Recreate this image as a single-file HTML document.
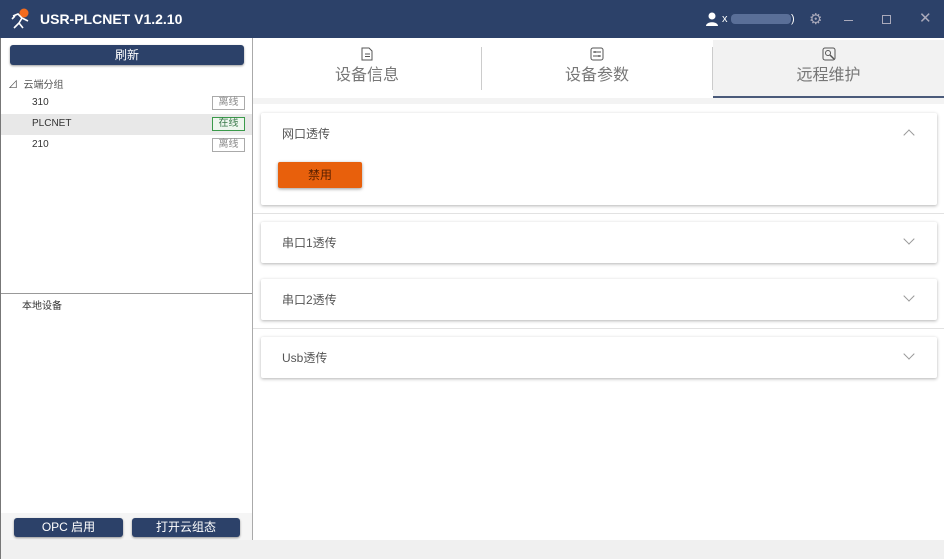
<!DOCTYPE html>
<html><head><meta charset="utf-8"><style>
*{margin:0;padding:0;box-sizing:border-box}
body{width:944px;height:559px;overflow:hidden;background:#f2f2f2;font-family:"Liberation Sans","Noto Sans CJK SC",sans-serif;position:relative}
.abs{position:absolute}
.title{left:0;top:0;width:944px;height:38px;background:#2c4169;color:#fff}
.btn{background:#2c4169;color:#fff;border-radius:3px;text-align:center;font-size:12px;box-shadow:0 1px 2px rgba(0,0,0,.4)}
.tag{width:33px;height:14px;border:1px solid #aaa;font-size:10px;color:#888;text-align:center;line-height:12px;background:#fff}
.card{left:261px;width:676px;background:#fff;box-shadow:0 1px 3px rgba(0,0,0,.3);border-radius:2px;font-size:12px;color:#555}
.chev{position:absolute;right:24px;width:8px;height:8px;border-right:1.3px solid #999;border-bottom:1.3px solid #999}
.tab{top:40px;height:58px;text-align:center;font-size:16px;color:#777}
</style></head><body>
<div class="abs title">
 <svg class="abs" style="left:9px;top:8px" width="24" height="22" viewBox="0 0 24 22"><circle cx="15" cy="5" r="4.5" fill="#f26b1d"/><path d="M4 8l5-2 4 4-3 5 4 5M10 15l-5 5M13 10l6 3M3 11l3-3" stroke="#fff" stroke-width="1.6" fill="none"/></svg>
 <div class="abs" style="left:40px;top:11px;font-size:14px;font-weight:bold">USR-PLCNET V1.2.10</div>
 <svg class="abs" style="left:706px;top:12px" width="12" height="14"><circle cx="6" cy="4" r="3.5" fill="#fff"/><path d="M0 14c0-5 12-5 12 0z" fill="#fff"/></svg>
 <div class="abs" style="left:722px;top:13px;font-size:11px">x</div>
 <div class="abs" style="left:731px;top:14px;width:60px;height:10px;background:#5a6f98;border-radius:4px"></div>
 <div class="abs" style="left:791px;top:13px;font-size:11px">)</div>
 <div class="abs" style="left:809px;top:10px;font-size:15px;color:#aab">⚙</div>
 <div class="abs" style="left:844px;top:20px;width:9px;height:1px;background:#aab"></div>
 <div class="abs" style="left:882px;top:15px;width:9px;height:9px;border:1px solid #aab"></div>
 <div class="abs" style="left:919px;top:9px;font-size:15px;color:#aab">✕</div>
</div>
<div class="abs" style="left:0;top:38px;width:253px;height:502px;background:#fff;border-left:1px solid #777;border-right:1px solid #aaa"></div>
<div class="abs btn" style="left:10px;top:45px;width:234px;height:20px;line-height:20px">刷新</div>
<div class="abs" style="left:8px;top:76px;font-size:10px;color:#555">⊿ &nbsp;云端分组</div>
<div class="abs" style="left:32px;top:97px;font-size:10px;color:#333">310</div>
<div class="abs tag" style="left:212px;top:96px">离线</div>
<div class="abs" style="left:1px;top:114px;width:251px;height:21px;background:#e8e8e8"></div>
<div class="abs" style="left:32px;top:118px;font-size:10px;color:#333">PLCNET</div>
<div class="abs tag" style="left:212px;top:117px;border-color:#3a9a4a;color:#3a7a4a;background:#eef6ee">在线</div>
<div class="abs" style="left:32px;top:139px;font-size:10px;color:#333">210</div>
<div class="abs tag" style="left:212px;top:138px">离线</div>
<div class="abs" style="left:1px;top:293px;width:251px;height:1px;background:#999"></div>
<div class="abs" style="left:22px;top:297px;font-size:10px;color:#333">本地设备</div>
<div class="abs" style="left:1px;top:513px;width:251px;height:27px;background:#f5f5f5"></div>
<div class="abs btn" style="left:14px;top:518px;width:109px;height:19px;line-height:19px">OPC 启用</div>
<div class="abs btn" style="left:132px;top:518px;width:108px;height:19px;line-height:19px">打开云组态</div>
<div class="abs" style="left:0;top:540px;width:944px;height:19px;background:#f0f0f0;border-left:1px solid #777"></div>
<div class="abs" style="left:253px;top:38px;width:691px;height:502px;background:#fff"></div>
<div class="abs tab" style="left:253px;width:228px"><svg style="margin-top:7px" width="12" height="14"><path d="M1 1h7l3 3v9H1z M4 7h5M4 9.5h5" stroke="#555" fill="none"/></svg><div style="margin-top:-5px">设备信息</div></div>
<div class="abs" style="left:481px;top:47px;width:1px;height:43px;background:#ccc"></div>
<div class="abs tab" style="left:482px;width:230px"><svg style="margin-top:7px" width="14" height="14"><rect x="1" y="1" width="12" height="12" rx="2" stroke="#555" fill="none"/><path d="M3 5h8M3 9h8M5 4v2M9 8v2" stroke="#555"/></svg><div style="margin-top:-5px">设备参数</div></div>
<div class="abs" style="left:712px;top:47px;width:1px;height:43px;background:#ccc"></div>
<div class="abs tab" style="left:713px;width:231px;background:#f2f2f2;border-bottom:2px solid #4a5a7a"><svg style="margin-top:7px" width="14" height="14"><rect x="1" y="1" width="12" height="12" rx="2" stroke="#555" fill="none"/><circle cx="6" cy="6" r="2.5" stroke="#555" fill="none"/><path d="M8 8l4 4" stroke="#555" stroke-width="1.5"/></svg><div style="margin-top:-5px">远程维护</div></div>
<div class="abs" style="left:253px;top:98px;width:691px;height:6px;background:#f3f3f3"></div>
<div class="abs card" style="top:113px;height:92px"><div class="abs" style="left:21px;top:12px">网口透传</div><div class="chev" style="top:18px;transform:rotate(-135deg)"></div>
<div class="abs" style="left:17px;top:49px;width:84px;height:26px;background:#e8600c;border-radius:2px;box-shadow:0 1px 3px rgba(0,0,0,.4);text-align:center;line-height:26px;color:#5a2000">禁用</div></div>
<div class="abs" style="left:253px;top:213px;width:691px;height:1px;background:#e2e2e2"></div>
<div class="abs card" style="top:222px;height:41px"><div class="abs" style="left:21px;top:12px">串口1透传</div><div class="chev" style="top:13px;transform:rotate(45deg)"></div></div>
<div class="abs card" style="top:279px;height:41px"><div class="abs" style="left:21px;top:12px">串口2透传</div><div class="chev" style="top:13px;transform:rotate(45deg)"></div></div>
<div class="abs" style="left:253px;top:328px;width:691px;height:1px;background:#e2e2e2"></div>
<div class="abs card" style="top:337px;height:41px"><div class="abs" style="left:21px;top:12px">Usb透传</div><div class="chev" style="top:13px;transform:rotate(45deg)"></div></div>
</body></html>
